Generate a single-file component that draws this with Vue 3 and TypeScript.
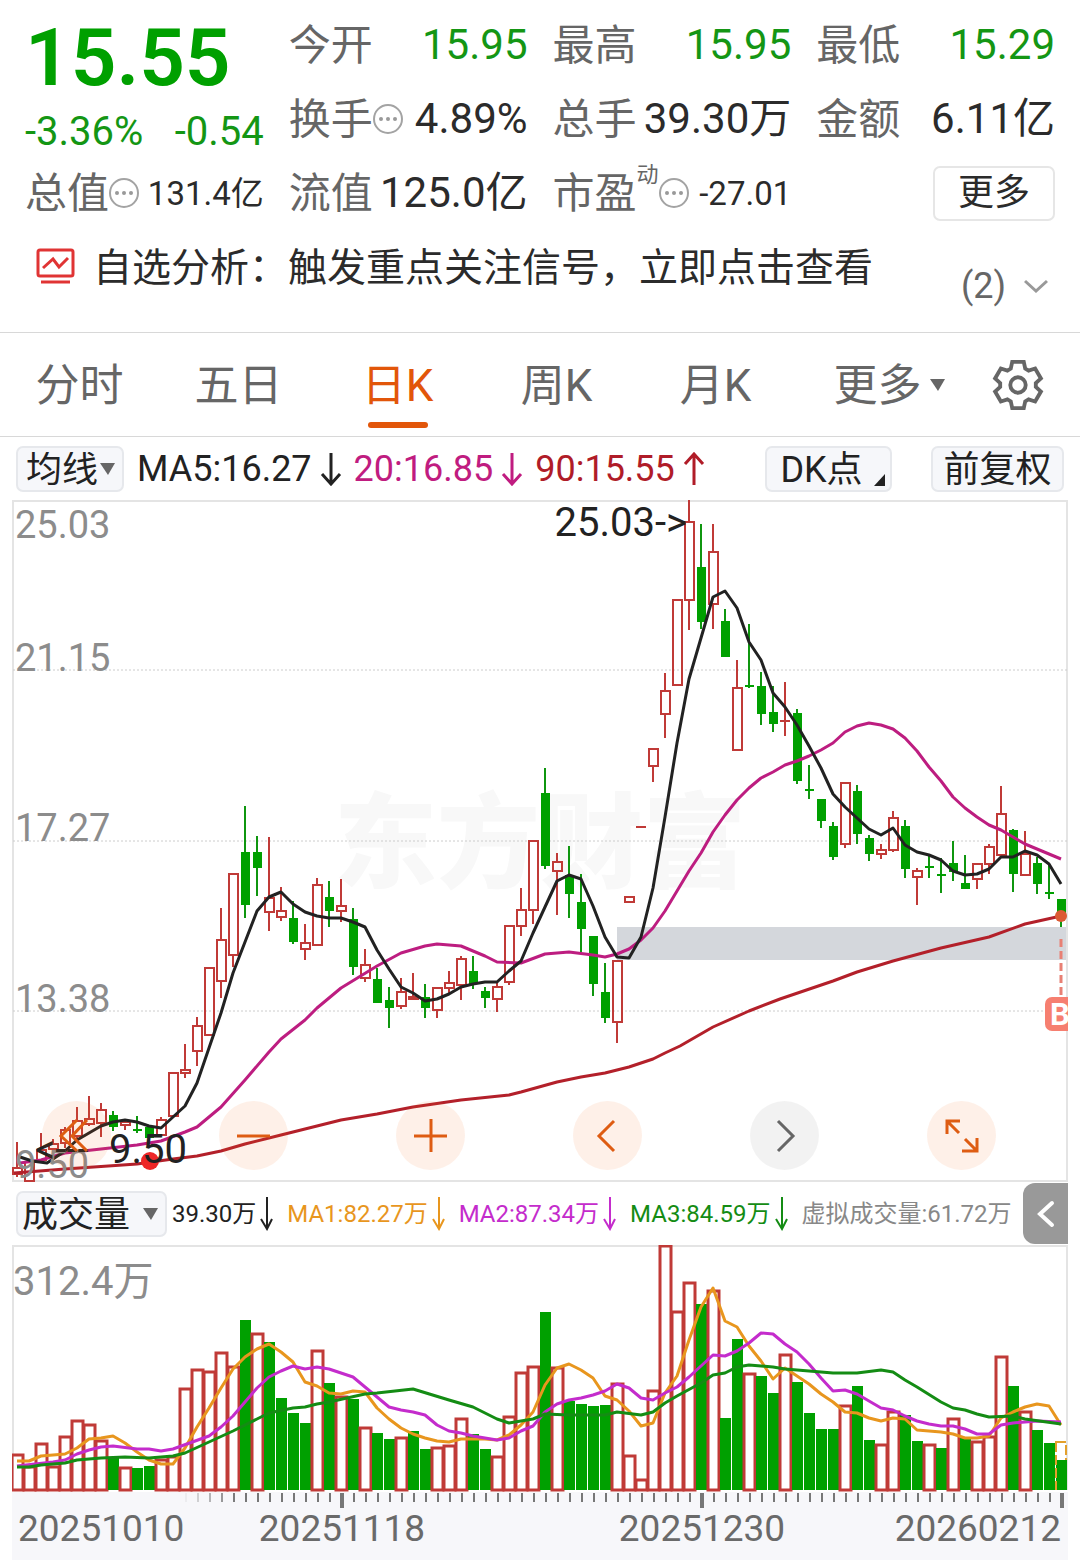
<script setup lang="ts">
import { ref } from 'vue'

type Tone = 'up' | 'down'
type Candle = [high: number, top: number, bottom: number, low: number, tone: 'r' | 'g']
type Point = [x: number, y: number]

interface Quote {
  label: string
  value: string
  tone?: 'down'
  hint?: boolean
  small?: boolean
  sup?: string
}

const quotes: Quote[] = [
  { label: '今开', value: '15.95', tone: 'down' },
  { label: '最高', value: '15.95', tone: 'down' },
  { label: '最低', value: '15.29', tone: 'down' },
  { label: '换手', value: '4.89%', hint: true },
  { label: '总手', value: '39.30万' },
  { label: '金额', value: '6.11亿' },
  { label: '总值', value: '131.4亿', hint: true, small: true },
  { label: '流值', value: '125.0亿' },
  { label: '市盈', value: '-27.01', hint: true, small: true, sup: '动' },
]

const tabs = ['分时', '五日', '日K', '周K', '月K']
const activeTab = ref('日K')

const averages = [
  { text: 'MA5:16.27', color: '#222222', tone: 'down' as Tone },
  { text: '20:16.85', color: '#c01c80', tone: 'down' as Tone },
  { text: '90:15.55', color: '#b01c28', tone: 'up' as Tone },
]

const volumeLegend = [
  { text: '39.30万', color: '#222222', arrow: true },
  { text: 'MA1:82.27万', color: '#e8961e', arrow: true },
  { text: 'MA2:87.34万', color: '#c42ccc', arrow: true },
  { text: 'MA3:84.59万', color: '#148c14', arrow: true },
  { text: '虚拟成交量:61.72万', color: '#888888', arrow: false },
]

const STEP = 12
const FIRST = 17
const xAt = (i: number): number => FIRST + i * STEP

const candles: Candle[] = [
  [1142, 1168, 1174, 1177, 'r'], [1162, 1162, 1181, 1181, 'r'], [1133, 1150, 1160, 1160, 'r'],
  [1139, 1144, 1149, 1156, 'r'], [1127, 1130, 1143, 1148, 'r'], [1107, 1121, 1136, 1140, 'r'],
  [1096, 1119, 1124, 1126, 'r'], [1103, 1110, 1123, 1137, 'r'], [1111, 1115, 1127, 1131, 'g'],
  [1120, 1122, 1125, 1130, 'r'], [1116, 1129, 1131, 1133, 'g'], [1127, 1127, 1138, 1138, 'g'],
  [1117, 1120, 1135, 1135, 'r'], [1072, 1073, 1116, 1116, 'r'], [1044, 1070, 1073, 1078, 'r'],
  [1017, 1026, 1051, 1066, 'r'], [968, 968, 1035, 1035, 'r'], [908, 940, 981, 998, 'r'],
  [873, 874, 955, 967, 'r'], [806, 852, 905, 918, 'g'], [836, 852, 868, 896, 'g'],
  [837, 898, 912, 931, 'r'], [887, 911, 917, 921, 'r'], [901, 918, 942, 944, 'g'],
  [924, 943, 949, 960, 'r'], [878, 885, 945, 945, 'r'], [881, 897, 911, 927, 'g'],
  [879, 906, 911, 922, 'r'], [908, 919, 967, 975, 'g'], [949, 965, 978, 982, 'r'],
  [968, 979, 1003, 1003, 'g'], [987, 1000, 1008, 1028, 'g'], [978, 992, 1006, 1009, 'r'],
  [973, 997, 999, 1000, 'r'], [984, 997, 1008, 1018, 'g'], [987, 988, 1010, 1018, 'r'],
  [971, 983, 988, 995, 'r'], [956, 959, 985, 1000, 'r'], [956, 971, 984, 989, 'g'],
  [987, 991, 998, 1008, 'g'], [983, 987, 999, 1012, 'r'], [926, 926, 982, 985, 'r'],
  [888, 910, 926, 936, 'r'], [840, 841, 910, 924, 'r'], [768, 793, 866, 869, 'g'],
  [853, 862, 871, 915, 'r'], [846, 875, 894, 918, 'g'], [874, 902, 929, 952, 'g'],
  [936, 936, 984, 996, 'g'], [963, 992, 1018, 1023, 'g'], [961, 961, 1022, 1043, 'r'],
  [897, 897, 902, 902, 'r'], [827, 827, 827, 827, 'r'], [749, 749, 766, 782, 'r'],
  [673, 691, 714, 738, 'r'], [600, 600, 685, 685, 'r'], [500, 522, 600, 630, 'r'],
  [524, 567, 622, 629, 'g'], [524, 552, 604, 629, 'r'], [609, 621, 657, 657, 'g'],
  [660, 688, 750, 750, 'r'], [624, 685, 687, 688, 'g'], [672, 686, 714, 725, 'g'],
  [686, 712, 724, 732, 'g'], [682, 721, 721, 736, 'r'], [709, 713, 781, 784, 'g'],
  [765, 789, 791, 799, 'g'], [799, 799, 821, 828, 'g'], [822, 826, 857, 860, 'g'],
  [782, 783, 844, 848, 'r'], [785, 791, 834, 844, 'g'], [835, 838, 854, 861, 'g'],
  [844, 850, 854, 859, 'r'], [811, 818, 850, 852, 'r'], [820, 826, 869, 878, 'g'],
  [868, 871, 877, 905, 'r'], [855, 866, 868, 878, 'g'], [858, 874, 876, 893, 'g'],
  [841, 863, 872, 881, 'g'], [855, 883, 889, 889, 'g'], [863, 864, 879, 889, 'r'],
  [844, 847, 864, 874, 'r'], [786, 814, 855, 855, 'r'], [829, 830, 874, 892, 'g'],
  [831, 854, 875, 875, 'r'], [857, 863, 884, 894, 'g'], [864, 892, 894, 899, 'g'],
  [899, 899, 915, 927, 'g'],
]

const volumes: [top: number, tone: 'r' | 'g'][] = [
  [1455, 'r'], [1467, 'r'], [1444, 'r'], [1467, 'r'], [1437, 'r'], [1421, 'r'], [1425, 'r'], [1441, 'r'],
  [1457, 'g'], [1468, 'r'], [1468, 'g'], [1466, 'g'], [1460, 'r'], [1457, 'r'], [1389, 'r'], [1370, 'r'],
  [1372, 'r'], [1353, 'r'], [1367, 'r'], [1320, 'g'], [1334, 'r'], [1342, 'g'], [1398, 'g'], [1413, 'g'],
  [1423, 'g'], [1351, 'r'], [1383, 'g'], [1397, 'r'], [1399, 'g'], [1428, 'r'], [1433, 'g'], [1439, 'g'],
  [1438, 'r'], [1431, 'g'], [1449, 'g'], [1448, 'r'], [1446, 'r'], [1419, 'r'], [1434, 'g'], [1449, 'g'],
  [1457, 'r'], [1417, 'r'], [1373, 'r'], [1367, 'r'], [1312, 'g'], [1368, 'r'], [1401, 'g'], [1404, 'g'],
  [1406, 'g'], [1405, 'g'], [1384, 'r'], [1456, 'r'], [1480, 'r'], [1391, 'r'], [1246, 'r'], [1312, 'r'],
  [1283, 'r'], [1304, 'g'], [1291, 'r'], [1418, 'g'], [1339, 'g'], [1374, 'r'], [1376, 'g'], [1393, 'g'],
  [1355, 'r'], [1382, 'g'], [1413, 'g'], [1429, 'g'], [1429, 'g'], [1406, 'r'], [1386, 'g'], [1440, 'g'],
  [1445, 'r'], [1412, 'r'], [1415, 'g'], [1441, 'g'], [1445, 'r'], [1448, 'g'], [1419, 'r'], [1438, 'g'],
  [1442, 'r'], [1437, 'r'], [1357, 'r'], [1386, 'g'], [1412, 'r'], [1430, 'g'], [1443, 'g'], [1460, 'g'],
]

const ma5: Point[] = [
  [20, 1157], [32, 1161], [47, 1163], [65, 1151], [77, 1140], [101, 1126], [113, 1122], [125, 1120],
  [137, 1122], [149, 1126], [161, 1128], [173, 1117], [185, 1106], [197, 1083], [209, 1048], [221, 1013],
  [233, 973], [245, 942], [257, 911], [269, 897], [281, 892], [293, 904], [305, 912], [317, 916],
  [329, 918], [341, 918], [353, 922], [365, 927], [377, 950], [389, 969], [401, 987], [413, 993],
  [425, 1001], [437, 999], [449, 994], [461, 987], [473, 984], [485, 982], [497, 982], [509, 971],
  [521, 961], [533, 933], [545, 907], [557, 881], [569, 875], [581, 879], [593, 906], [605, 937],
  [617, 957], [629, 958], [641, 937], [653, 888], [665, 817], [677, 743], [689, 679], [701, 638],
  [713, 597], [725, 591], [737, 608], [749, 642], [761, 660], [773, 693], [785, 707], [797, 725],
  [809, 746], [821, 768], [833, 794], [845, 807], [857, 818], [869, 829], [881, 835], [893, 828],
  [905, 845], [917, 852], [929, 855], [941, 860], [953, 871], [965, 875], [977, 874], [989, 869],
  [1001, 857], [1013, 857], [1025, 851], [1037, 855], [1049, 864], [1061, 884],
]
const ma20: Point[] = [
  [20, 1163], [41, 1160], [65, 1153], [101, 1149], [137, 1145], [161, 1141], [185, 1132], [197, 1127],
  [221, 1107], [245, 1080], [269, 1052], [281, 1039], [305, 1020], [317, 1008], [341, 988], [377, 966],
  [401, 953], [425, 946], [437, 944], [461, 946], [485, 956], [497, 962], [521, 963], [545, 954],
  [569, 952], [593, 955], [605, 957], [617, 954], [629, 949], [641, 940], [653, 928], [665, 911],
  [677, 891], [689, 871], [701, 853], [713, 832], [725, 815], [737, 800], [749, 788], [761, 778],
  [773, 772], [785, 765], [797, 761], [809, 756], [821, 750], [833, 743], [845, 732], [857, 726],
  [869, 723], [881, 725], [893, 729], [905, 738], [917, 751], [929, 767], [941, 781], [953, 797],
  [965, 808], [977, 817], [989, 825], [1001, 830], [1013, 837], [1025, 844], [1037, 849], [1049, 854],
  [1061, 859],
]
const ma90: Point[] = [
  [14, 1173], [65, 1169], [137, 1164], [173, 1159], [197, 1156], [221, 1151], [245, 1144], [281, 1135],
  [317, 1126], [341, 1120], [377, 1114], [413, 1107], [461, 1100], [509, 1095], [521, 1092], [557, 1082],
  [581, 1077], [605, 1073], [629, 1067], [653, 1059], [665, 1053], [680, 1046], [713, 1027], [749, 1011],
  [780, 999], [833, 981], [857, 972], [893, 961], [941, 948], [989, 937], [1025, 924], [1061, 916],
]
const volMa1: Point[] = [
  [17, 1461], [29, 1461], [41, 1456], [65, 1454], [77, 1448], [89, 1439], [101, 1438], [113, 1436],
  [125, 1443], [137, 1452], [149, 1460], [161, 1464], [173, 1464], [185, 1448], [197, 1427], [209, 1408],
  [221, 1388], [233, 1369], [245, 1357], [257, 1349], [269, 1344], [281, 1352], [293, 1362], [305, 1382],
  [317, 1386], [329, 1393], [341, 1394], [353, 1391], [365, 1392], [377, 1408], [389, 1419], [401, 1428],
  [413, 1434], [425, 1438], [437, 1441], [449, 1442], [461, 1439], [485, 1439], [497, 1440], [509, 1435],
  [521, 1425], [533, 1412], [545, 1385], [557, 1368], [569, 1364], [581, 1370], [593, 1378], [605, 1396],
  [617, 1400], [629, 1411], [641, 1426], [653, 1423], [665, 1393], [677, 1376], [689, 1340], [701, 1307],
  [713, 1288], [725, 1321], [737, 1327], [749, 1346], [761, 1361], [773, 1379], [785, 1368], [797, 1376],
  [809, 1384], [821, 1394], [833, 1402], [845, 1412], [857, 1413], [869, 1418], [881, 1421], [893, 1418],
  [905, 1419], [917, 1430], [929, 1431], [941, 1432], [953, 1434], [965, 1438], [977, 1438], [989, 1436],
  [1001, 1418], [1013, 1412], [1025, 1407], [1037, 1404], [1049, 1406], [1061, 1425],
]
const volMa2: Point[] = [
  [17, 1466], [53, 1462], [65, 1460], [77, 1454], [89, 1450], [101, 1447], [113, 1446], [137, 1449],
  [149, 1449], [161, 1451], [173, 1449], [209, 1436], [221, 1427], [233, 1416], [245, 1402], [257, 1388],
  [269, 1377], [281, 1371], [293, 1366], [305, 1369], [317, 1367], [329, 1369], [341, 1373], [353, 1377],
  [365, 1387], [377, 1397], [389, 1407], [401, 1410], [413, 1412], [425, 1415], [437, 1425], [449, 1431],
  [461, 1433], [473, 1436], [485, 1438], [497, 1440], [509, 1438], [521, 1431], [533, 1426], [545, 1412],
  [557, 1404], [569, 1400], [581, 1398], [593, 1395], [605, 1391], [617, 1384], [629, 1388], [641, 1398],
  [653, 1400], [665, 1393], [677, 1387], [689, 1377], [701, 1366], [713, 1355], [725, 1356], [737, 1351],
  [749, 1343], [761, 1333], [773, 1334], [785, 1344], [797, 1352], [809, 1364], [821, 1378], [833, 1391],
  [845, 1390], [857, 1394], [881, 1408], [893, 1410], [905, 1416], [917, 1421], [929, 1424], [941, 1426],
  [953, 1426], [965, 1429], [977, 1434], [989, 1434], [1001, 1425], [1013, 1423], [1025, 1422], [1037, 1421],
  [1061, 1422],
]
const volMa3: Point[] = [
  [17, 1467], [29, 1467], [41, 1465], [65, 1463], [77, 1460], [101, 1458], [125, 1457], [149, 1458],
  [173, 1456], [185, 1453], [209, 1442], [233, 1431], [257, 1419], [269, 1413], [293, 1408], [305, 1407],
  [317, 1404], [329, 1402], [365, 1394], [377, 1393], [413, 1389], [449, 1400], [473, 1407], [497, 1419],
  [509, 1423], [533, 1419], [545, 1414], [569, 1415], [605, 1415], [617, 1412], [641, 1415], [653, 1412],
  [665, 1403], [677, 1396], [701, 1383], [713, 1375], [725, 1373], [737, 1367], [749, 1365], [773, 1367],
  [785, 1369], [833, 1373], [857, 1373], [881, 1370], [893, 1372], [905, 1380], [917, 1387], [941, 1402],
  [953, 1408], [965, 1410], [977, 1414], [989, 1417], [1013, 1416], [1025, 1419], [1061, 1424],
]

const line = (points: Point[]): string => points.map((p) => p.join(',')).join(' ')

const gridLines = [670, 841, 1011]
const priceLabels = [
  { y: 538, text: '25.03' },
  { y: 671, text: '21.15' },
  { y: 841, text: '17.27' },
  { y: 1012, text: '13.38' },
  { y: 1178, text: '9.50' },
]

// Minor ticks fade in after the first date label; every 30th session is a major one.
const ticks = Array.from({ length: 74 }, (_, k) => {
  const x = 186 + k * STEP
  return { x, major: (x - 342) % 360 === 0, opacity: Math.min(1, 0.08 + k * 0.22) }
})

const dates = [
  { x: 18, anchor: 'start', text: '20251010' },
  { x: 342, anchor: 'middle', text: '20251118' },
  { x: 702, anchor: 'middle', text: '20251230' },
  { x: 1061, anchor: 'end', text: '20260212' },
]

const controls = [
  { name: '最早', d: 'M35 19 19 35l16 15M45 19 30 35l15 15', muted: false },
  { name: '缩小', d: 'M18 35h33', muted: false },
  { name: '放大', d: 'M18 35h33M35 18v33', muted: false },
  { name: '向左', d: 'M41 20 26 35l15 15', muted: false },
  { name: '向右', d: 'M28 20 43 35l-15 15', muted: true },
  { name: '全屏', d: 'M33 20H20v13M20 20l12 12M38 38l12 12M50 37v13H35', muted: false },
]
</script>

<template>
  <main class="stock">
    <section class="quote">
      <div class="price">
        <strong>15.55</strong>
        <div class="change"><span>-3.36%</span><span>-0.54</span></div>
      </div>
      <div v-for="q in quotes" :key="q.label" class="cell">
        <span class="label">{{ q.label }}</span>
        <sup v-if="q.sup">{{ q.sup }}</sup>
        <svg v-if="q.hint" class="hint" viewBox="0 0 30 30" aria-hidden="true">
          <circle cx="15" cy="15" r="14" fill="none" stroke="#a3a3a3" stroke-width="2" />
          <circle cx="8" cy="15" r="2" fill="#999" />
          <circle cx="15" cy="15" r="2" fill="#999" />
          <circle cx="22" cy="15" r="2" fill="#999" />
        </svg>
        <span class="value" :class="[q.tone, { small: q.small }]">{{ q.value }}</span>
      </div>
      <div class="cell end"><button class="more" type="button">更多</button></div>
    </section>

    <section class="notice">
      <svg class="monitor" viewBox="0 0 39 36" fill="none" stroke="#e03434" aria-hidden="true">
        <rect x="2" y="2" width="35" height="26" rx="2" stroke-width="3" />
        <path d="M7 20l10-9 6 8 9-9" stroke-width="3" />
        <path d="M5 34h29" stroke-width="3" />
      </svg>
      <a href="#analysis">自选分析：触发重点关注信号，立即点击查看</a>
      <button class="count" type="button">
        (2)
        <svg viewBox="0 0 24 14" aria-hidden="true"><path d="M1 2l11 10L23 2" fill="none" stroke="#999" stroke-width="3" /></svg>
      </button>
    </section>

    <nav class="tabs">
      <button v-for="t in tabs" :key="t" type="button" :class="{ active: t === activeTab }" @click="activeTab = t"><span>{{ t }}</span></button>
      <button type="button">
        <span>更多</span>
        <svg class="caret" viewBox="0 0 15 12" aria-hidden="true"><path d="M0 0h15L8 12z" fill="#666" /></svg>
      </button>
      <button type="button" aria-label="设置">
        <svg class="gear" viewBox="-27 -27 54 54" fill="none" stroke="#666" stroke-width="4" aria-hidden="true">
          <path d="M-6-24H6L7.500-17 11-15 17.800-17.200 23.800-6.800 18.500-2V2L23.800 6.800 17.800 17.200 11 15 7.500 17 6 24H-6L-7.500 17-11 15-17.800 17.200-23.800 6.800-18.500 2V-2L-23.800-6.800-17.800-17.200-11-15-7.500-17Z" />
          <circle r="8" />
        </svg>
      </button>
    </nav>

    <section class="toolbar">
      <label class="pick line-pick">
        <select aria-label="指标"><option>均线</option></select>
        <svg class="caret" viewBox="0 0 15 12" aria-hidden="true"><path d="M0 0h15L8 12z" fill="#666" /></svg>
      </label>
      <div class="averages">
        <span v-for="a in averages" :key="a.text" :style="{ color: a.color }">
          {{ a.text }}
          <svg viewBox="0 0 24 34" fill="none" stroke="currentColor" stroke-width="3" aria-hidden="true">
            <path v-if="a.tone === 'down'" d="M12 1v31M3 22l9 10 9-10" />
            <path v-else d="M12 33V2M3 12l9-10 9 10" />
          </svg>
        </span>
      </div>
      <button class="chip dk" type="button">
        DK点<svg viewBox="0 0 11 12" aria-hidden="true"><path d="M11 0v12H0z" fill="#222" /></svg>
      </button>
      <button class="chip" type="button">前复权</button>
    </section>

    <section class="chart">
      <svg class="plot" viewBox="12 500 1056 682" role="img" aria-label="日K线">
        <rect x="617" y="927" width="450" height="33" fill="#d4d7dc" />
        <text class="mark" x="540" y="880" text-anchor="middle">东方财富</text>
        <rect x="13" y="501" width="1054" height="680" fill="none" stroke="#e4e4e4" stroke-width="2" />
        <line v-for="y in gridLines" :key="y" x1="13" x2="1067" :y1="y" :y2="y" stroke="#ccc" stroke-width="1" stroke-dasharray="2 2" />
        <g class="candles">
          <g v-for="(c, i) in candles" :key="i" :class="c[4] === 'r' ? 'rise' : 'fall'">
            <line :x1="xAt(i)" :x2="xAt(i)" :y1="c[0]" :y2="c[1]" />
            <line :x1="xAt(i)" :x2="xAt(i)" :y1="c[2]" :y2="c[3]" />
            <path v-if="c[2] === c[1]" :d="`M${xAt(i) - 5} ${c[1]}h10`" />
            <rect v-else-if="c[4] === 'r'" :x="xAt(i) - 4" :y="c[1]" width="9" :height="c[2] - c[1]" />
            <rect v-else :x="xAt(i) - 4" :y="c[1]" width="9" :height="c[2] - c[1]" class="body" />
          </g>
        </g>
        <polyline :points="line(ma90)" stroke="#b3202a" />
        <polyline :points="line(ma20)" stroke="#bd1d80" />
        <polyline :points="line(ma5)" stroke="#222" />
        <text v-for="p in priceLabels" :key="p.y" class="scale" x="15" :y="p.y">{{ p.text }}</text>
        <circle cx="150" cy="1161" r="9" fill="#ee2626" />
        <text class="peak" x="687" y="536" text-anchor="end">25.03-&gt;</text>
        <text class="peak" x="35" y="1163">&lt;---</text>
        <text class="peak" x="187" y="1163" text-anchor="end">9.50</text>
        <circle cx="1061" cy="916" r="6" fill="#dc5a34" />
        <path d="M1061 939v57" stroke="#e88074" stroke-width="3" stroke-dasharray="8 4" />
        <rect x="1045" y="997" width="34" height="34" rx="7" fill="#f67f70" />
        <text class="buy" x="1050" y="1025">B</text>
      </svg>
      <div class="controls">
        <button v-for="c in controls" :key="c.name" type="button" :aria-label="c.name" :class="{ muted: c.muted }">
          <svg viewBox="0 0 69 69" fill="none" stroke="currentColor" stroke-width="3" aria-hidden="true">
            <path :d="c.d" />
          </svg>
        </button>
      </div>
    </section>

    <section class="volume-bar">
      <label class="pick volume-pick">
        <select aria-label="副图"><option>成交量</option></select>
        <svg class="caret" viewBox="0 0 15 12" aria-hidden="true"><path d="M0 0h15L8 12z" fill="#666" /></svg>
      </label>
      <div class="legend">
        <span v-for="v in volumeLegend" :key="v.text" :style="{ color: v.color }">
          {{ v.text }}
          <svg v-if="v.arrow" viewBox="0 0 13 34" fill="none" stroke="currentColor" stroke-width="2" aria-hidden="true">
            <path d="M7 0v32M1 22l6 10 5-10" />
          </svg>
        </span>
      </div>
      <button class="collapse" type="button" aria-label="展开">
        <svg viewBox="0 0 18 28" fill="none" stroke="#fff" stroke-width="4" stroke-linecap="round" aria-hidden="true"><path d="M15 3 3 14l12 11" /></svg>
      </button>
    </section>

    <section class="chart">
      <svg class="plot" viewBox="12 1245 1056 315" role="img" aria-label="成交量">
        <path d="M13 1490V1246H1067V1490" fill="none" stroke="#e4e4e4" stroke-width="2" />
        <rect x="12" y="1492" width="1056" height="68" fill="#f7f7fa" />
        <text class="scale total" x="13" y="1295">312.4万</text>
        <g v-for="(v, i) in volumes" :key="i" :class="v[1] === 'r' ? 'rise' : 'fall'">
          <rect v-if="v[1] === 'r'" :x="xAt(i) - 5" :y="v[0]" width="11" :height="1490 - v[0]" />
          <rect v-else :x="xAt(i) - 5" :y="v[0]" width="11" :height="1490 - v[0]" class="solid" />
        </g>
        <rect x="1056" y="1442" width="10" height="47" fill="none" stroke="#e3a02c" stroke-width="2" stroke-dasharray="10 3" />
        <rect x="1057" y="1460" width="10" height="30" fill="#00a000" />
        <polyline :points="line(volMa1)" stroke="#e8961e" />
        <polyline :points="line(volMa2)" stroke="#c42ccc" />
        <polyline :points="line(volMa3)" stroke="#148c14" />
        <rect
          v-for="t in ticks"
          :key="t.x"
          :x="t.major ? t.x - 2 : t.x - 1"
          y="1493"
          :width="t.major ? 4 : 2"
          :height="t.major ? 15 : 9"
          fill="#777"
          :opacity="t.opacity"
        />
        <text v-for="d in dates" :key="d.text" class="date" :x="d.x" y="1541" :text-anchor="d.anchor">{{ d.text }}</text>
      </svg>
    </section>
  </main>
</template>

<style>
body {
  margin: 0;
  background: #fff;
}
</style>

<style scoped>
.stock {
  font-family: Roboto, "Noto Sans CJK SC", sans-serif;
  line-height: 1;
  color: #2b2b2b;
  overflow: hidden;
}

button,
select {
  font: inherit;
  color: inherit;
  padding: 0;
  border: 0;
  background: none;
  cursor: pointer;
}

svg {
  flex: none;
}

.quote {
  display: grid;
  grid-template-columns: repeat(4, 1fr);
  grid-auto-rows: 74px;
  column-gap: 25px;
  padding: 8px 25px 0;
  white-space: nowrap;
}

.price {
  grid-row: span 2;
  display: flex;
  flex-direction: column;
  color: #00a000;
}

.price strong {
  font-size: 80px;
  line-height: 100px;
  font-weight: 600;
}

.change {
  display: flex;
  justify-content: space-between;
  font-size: 40px;
  line-height: 48px;
  color: #149614;
}

.cell {
  display: flex;
  align-items: center;
  font-size: 42px;
}

.label {
  padding-top: 2px;
  color: #666;
}

.cell sup {
  align-self: flex-start;
  margin-top: 8px;
  font-size: 22px;
  color: #666;
}

.hint {
  width: 30px;
  height: 30px;
}

.value {
  margin-left: auto;
}

.value.down {
  color: #149614;
}

.value.small {
  font-size: 33px;
}

.end {
  justify-content: flex-end;
}

.more {
  box-sizing: border-box;
  width: 122px;
  height: 55px;
  border: 2px solid #e6e6e6;
  border-radius: 7px;
  font-size: 36px;
}

.notice {
  display: flex;
  align-items: flex-start;
  box-sizing: border-box;
  padding: 0 32px 0 36px;
  height: 103px;
  border-bottom: 1px solid #d8d8d8;
  font-size: 39px;
  white-space: nowrap;
}

.monitor {
  width: 39px;
  height: 36px;
  margin-top: 18px;
}

.notice a {
  margin: 19px 0 0 18px;
  color: inherit;
  text-decoration: none;
}

.count {
  display: flex;
  align-items: center;
  gap: 18px;
  margin: 38px 0 0 auto;
  font-size: 36px;
  color: #666;
}

.count svg {
  width: 24px;
  height: 14px;
}

.tabs {
  display: grid;
  grid-template-columns: repeat(5, 159fr) 188fr 70fr;
  padding-right: 27px;
  height: 103px;
  border-bottom: 1px solid #d8d8d8;
  font-size: 44px;
  color: #666;
}

.tabs button {
  position: relative;
  display: flex;
  align-items: center;
  justify-content: center;
}

.tabs span {
  padding-top: 3px;
}

.tabs .active {
  color: #e2560a;
}

.tabs .active::after {
  content: "";
  position: absolute;
  bottom: 8px;
  width: 60px;
  height: 6px;
  border-radius: 3px;
  background: #e2560a;
}

.tabs .caret {
  margin-left: 8px;
}

.caret {
  width: 15px;
  height: 12px;
}

.gear {
  width: 52px;
  height: 52px;
}

.toolbar {
  display: flex;
  align-items: center;
  height: 63px;
  padding: 0 16px;
  font-size: 36px;
  white-space: nowrap;
}

.pick {
  position: relative;
  display: flex;
}

.pick select,
.chip {
  box-sizing: border-box;
  height: 46px;
  padding-top: 2px;
  border: 2px solid #e6e8ec;
  border-radius: 7px;
  background: #f6f7fa;
  color: #222;
}

.pick select {
  appearance: none;
  width: 100%;
}

.pick .caret {
  position: absolute;
  top: 17px;
  right: 9px;
  pointer-events: none;
}

.line-pick {
  width: 108px;
}

.line-pick select {
  padding-left: 8px;
}

.volume-pick {
  width: 151px;
}

.volume-pick select {
  padding-left: 4px;
}

.averages {
  display: flex;
  gap: 11px;
  margin: 0 auto 0 13px;
}

.averages span {
  display: flex;
  align-items: center;
  gap: 7px;
}

.averages svg {
  width: 24px;
  height: 34px;
}

.chip {
  width: 133px;
}

.dk {
  position: relative;
  width: 127px;
  margin-right: 39px;
  padding-right: 14px;
}

.dk svg {
  position: absolute;
  right: 5px;
  bottom: 4px;
  width: 11px;
  height: 12px;
}

.chart {
  position: relative;
  margin: 0 12px;
}

.plot {
  display: block;
  width: 100%;
  height: auto;
}

.plot polyline {
  fill: none;
  stroke-width: 3;
  stroke-linejoin: round;
}

.rise line,
.rise path,
.rise rect {
  fill: none;
  stroke: #c03a37;
  stroke-width: 3;
}

.candles .rise line,
.candles .rise path,
.fall line {
  stroke-width: 2;
}

.candles .rise rect {
  stroke-width: 2;
}

.fall line {
  stroke: #0f960f;
}

.fall .body,
.fall .solid {
  fill: #00a000;
}

.scale {
  font-size: 38px;
  fill: #8c8c8c;
}

.peak,
.total {
  font-size: 40px;
}

.peak {
  fill: #222;
}

.mark {
  font-size: 103px;
  font-weight: 900;
  fill: #f8f8f8;
}

.buy {
  font-size: 31px;
  font-weight: 700;
  fill: #fff;
}

.date {
  font-size: 37px;
  fill: #6a6a6a;
}

.controls {
  position: absolute;
  left: 30px;
  right: 72px;
  bottom: 12px;
  display: flex;
  justify-content: space-between;
}

.controls button {
  width: 69px;
  height: 69px;
  border-radius: 50%;
  background: rgba(250, 110, 30, 0.1);
  color: #de5c12;
}

.controls .muted {
  background: rgba(0, 0, 0, 0.05);
  color: #666;
}

.controls svg {
  display: block;
  width: 69px;
  height: 69px;
}

.volume-bar {
  display: flex;
  align-items: center;
  height: 63px;
  padding: 0 12px 0 16px;
  font-size: 36px;
  white-space: nowrap;
}

.legend {
  display: flex;
  gap: 14px;
  margin: 0 auto 0 5px;
  font-size: 24px;
}

.legend span {
  display: flex;
  align-items: center;
  gap: 4px;
}

.legend svg {
  width: 13px;
  height: 34px;
}

.collapse {
  display: flex;
  align-items: center;
  justify-content: center;
  width: 45px;
  height: 61px;
  border-radius: 12px 0 0 12px;
  background: #999;
}

.collapse svg {
  width: 18px;
  height: 28px;
}
</style>
